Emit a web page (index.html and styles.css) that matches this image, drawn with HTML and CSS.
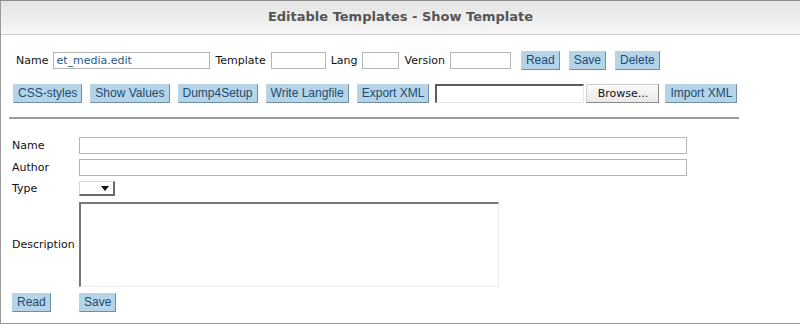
FILE: index.html
```html
<!DOCTYPE html>
<html lang="en">
<head>
    <meta charset="UTF-8">
    <title>Editable Templates - Show Template</title>
    <link rel="stylesheet" href="styles.css">
</head>
<body>
    <div class="panel">
        <div class="panel-title">Editable Templates - Show Template</div>

        <div class="panel-body">
            <!-- Template auswählen -->
            <div class="row row-top">
                <label class="lbl">Name</label>
                <input type="text" class="inp inp-name" value="et_media.edit">
                <label class="lbl">Template</label>
                <input type="text" class="inp inp-template">
                <label class="lbl">Lang</label>
                <input type="text" class="inp inp-lang">
                <label class="lbl">Version</label>
                <input type="text" class="inp inp-version">
                <button class="btn btn-first">Read</button>
                <button class="btn">Save</button>
                <button class="btn">Delete</button>
            </div>

            <!-- Werkzeuge -->
            <div class="row row-tools">
                <button class="btn">CSS-styles</button>
                <button class="btn">Show Values</button>
                <button class="btn">Dump4Setup</button>
                <button class="btn">Write Langfile</button>
                <button class="btn">Export XML</button>
                <div class="file-input">
                    <input type="text" class="file-path">
                    <button class="browse">Browse...</button>
                </div>
                <button class="btn btn-import">Import XML</button>
            </div>

            <hr class="divider">

            <div class="form">
                <label class="lbl">Name</label>
                <input type="text" class="inp inp-wide">

                <label class="lbl">Author</label>
                <input type="text" class="inp inp-wide">

                <label class="lbl">Type</label>
                <div class="fake-select"><span class="arrow"></span></div>

                <label class="lbl">Description</label>
                <textarea class="desc"></textarea>

                <div class="form-btn"><button class="btn">Read</button></div>
                <div class="form-btn"><button class="btn">Save</button></div>
            </div>
        </div>
    </div>
</body>
</html>
```

FILE: styles.css
```css
body {
    margin: 0;
    background: #fff;
    font-family: "DejaVu Sans", Verdana, sans-serif;
    font-size: 11px;
    color: #111;
}

.panel {
    border-top: 1px solid #8c8c8c;
    border-left: 1px solid #9a9a9a;
    border-bottom: 1px solid #9a9a9a;
    height: 322px;
    width: 799px;
}

.panel-title {
    height: 33px;
    line-height: 31px;
    border-bottom: 1px solid #cdcdcd;
    background: linear-gradient(#e4e4e4, #f6f6f6);
    text-align: center;
    font-weight: bold;
    font-size: 13px;
    color: #555;
}

.panel-body {
    padding: 16px 0 0 0;
}

.row {
    display: flex;
    align-items: center;
}

.row-top {
    padding-left: 15px;
    height: 19px;
}

.row-top .lbl {
    margin-right: 5px;
}

.row-top .inp {
    margin-right: 5px;
}

.lbl {
    white-space: nowrap;
}

.inp {
    height: 17px;
    box-sizing: border-box;
    border: 1px solid #b4b4b4;
    padding: 0 2px;
    margin: 0;
    font-family: "DejaVu Sans", Verdana, sans-serif;
    font-size: 11px;
    color: #1f5a88;
    background: #fff;
    outline: none;
}

.inp-name { width: 157px; }
.inp-template { width: 55px; }
.inp-lang { width: 37px; }
.inp-version { width: 61px; }

.btn {
    height: 19px;
    box-sizing: border-box;
    margin: 0;
    padding: 0 4px;
    border: 1px solid #b7d3e6;
    border-right-color: #6f8fa5;
    border-bottom-color: #6f8fa5;
    background: #b6d4e8;
    color: #1c4c72;
    font-family: "Liberation Sans", Arial, sans-serif;
    font-size: 12px;
    line-height: 17px;
    cursor: pointer;
}

.row-top .btn {
    margin-left: 9px;
}

.row-top .btn-first {
    margin-left: 5px;
}

.row-tools {
    margin-top: 14px;
    padding-left: 12px;
    gap: 8px;
}

.file-input {
    display: flex;
    align-items: center;
    margin-left: -2px;
}

.file-path {
    width: 149px;
    height: 19px;
    box-sizing: border-box;
    margin: 0;
    border: 1px solid #e6e6e6;
    border-top: 2px solid #5c5c5c;
    border-left: 2px solid #5c5c5c;
    outline: none;
}

.browse {
    width: 73px;
    height: 19px;
    margin-left: 2px;
    box-sizing: border-box;
    border: 1px solid #cfcfcf;
    border-right-color: #8a8a8a;
    border-bottom-color: #8a8a8a;
    background: linear-gradient(#fafafa, #e9e9e9);
    font-family: "DejaVu Sans", Verdana, sans-serif;
    font-size: 11px;
    color: #111;
    padding: 0;
}

.row-tools .btn-import {
    margin-left: -2px;
}

.divider {
    margin: 14px 0 0 8px;
    width: 730px;
    height: 0;
    border: 0;
    border-top: 2px solid #9c9c9c;
}

.form {
    display: grid;
    grid-template-columns: 67px auto;
    row-gap: 5px;
    padding: 18px 0 0 11px;
    align-items: center;
}

.inp-wide {
    width: 608px;
}

.fake-select {
    position: relative;
    width: 36px;
    height: 15px;
    box-sizing: border-box;
    border: 1px solid #d8d8d8;
    border-right: 2px solid #6a6a6a;
    border-bottom: 2px solid #6a6a6a;
    background: #fff;
}

.fake-select .arrow {
    position: absolute;
    right: 4px;
    top: 4px;
    width: 0;
    height: 0;
    border-left: 4px solid transparent;
    border-right: 4px solid transparent;
    border-top: 5px solid #111;
}

.desc {
    width: 420px;
    height: 85px;
    box-sizing: border-box;
    margin: 1px 0 0 0;
    border: 1px solid #ececec;
    border-top: 2px solid #777;
    border-left: 2px solid #777;
    resize: none;
    outline: none;
    display: block;
}

.form-btn {
    margin-top: 1px;
}
```
